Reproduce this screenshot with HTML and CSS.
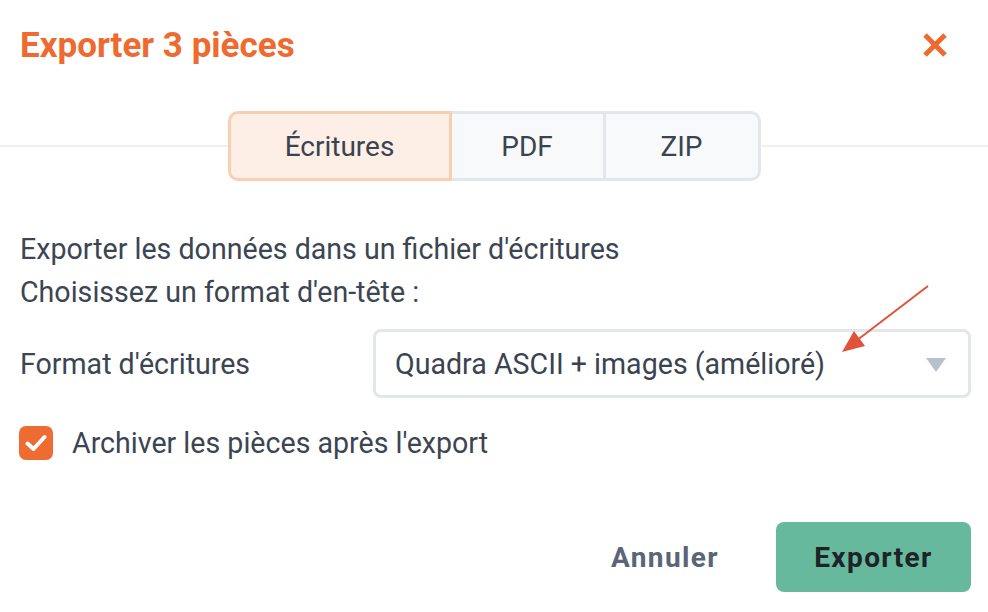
FILE: index.html
```html
<!DOCTYPE html>
<html lang="fr">
<head>
<meta charset="utf-8">
<title>Exporter 3 pièces</title>
<link rel="stylesheet" href="styles.css">
</head>
<body>
<div class="dialog">
  <div class="header">
    <h1 class="title">Exporter 3 pièces</h1>
    <button class="close" aria-label="Fermer">
      <svg width="26" height="26" viewBox="0 0 26 26"><path d="M3 3 L23 23 M23 3 L3 23" stroke="#ee6a2f" stroke-width="5" fill="none"/></svg>
    </button>
  </div>
  <div class="tabs-row">
    <div class="rule"></div>
    <div class="tabs">
      <div class="tab tab-active">Écritures</div>
      <div class="tab tab-pdf">PDF</div>
      <div class="tab tab-zip">ZIP</div>
    </div>
    <div class="rule"></div>
  </div>
  <div class="intro">
    <p>Exporter les données dans un fichier d'écritures</p>
    <p>Choisissez un format d'en-tête :</p>
  </div>
  <div class="field">
    <label class="field-label">Format d'écritures</label>
    <div class="select">
      <span>Quadra ASCII + images (amélioré)</span>
      <svg class="caret" width="20" height="14" viewBox="0 0 20 14"><path d="M0 0 H20 L10 14 Z" fill="#b9c0ca"/></svg>
    </div>
  </div>
  <div class="check-row">
    <span class="checkbox">
      <svg width="22" height="18" viewBox="0 0 22 18"><path d="M2.5 9.5 L8.5 15 L19.5 3" stroke="#fff" stroke-width="4" fill="none" stroke-linecap="round" stroke-linejoin="round"/></svg>
    </span>
    <span class="check-label">Archiver les pièces après l'export</span>
  </div>
  <div class="footer">
    <button class="btn-cancel">Annuler</button>
    <button class="btn-export">Exporter</button>
  </div>
</div>
<svg class="annotation" width="988" height="612" viewBox="0 0 988 612">
  <line x1="928" y1="286" x2="856" y2="341" stroke="#e0523c" stroke-width="2"/>
  <polygon points="842,352 865,346 854,331" fill="#e0523c"/>
</svg>
</body>
</html>
```

FILE: styles.css
```css
* { box-sizing: border-box; }
html, body { margin: 0; padding: 0; background: #fff; }
body {
  font-family: Roboto, "Noto Sans", Arial, sans-serif;
  color: #3c4552;
  width: 988px;
  height: 612px;
  overflow: hidden;
  position: relative;
}
.dialog { display: flex; flex-direction: column; }
.header {
  height: 90px;
  padding: 0 40px 0 20px;
  display: flex;
  align-items: center;
  justify-content: space-between;
}
.title {
  margin: 0;
  font-size: 35px;
  font-weight: 700;
  color: #ee6a2f;
}
.close {
  border: 0; background: none; padding: 0; margin: 0;
  width: 26px; height: 26px; display: block;
}
.close svg { display: block; }
.tabs-row {
  margin-top: 21px;
  display: flex;
  align-items: center;
  height: 70px;
}
.rule { flex: 1; height: 2px; background: #eef0f2; }
.tabs { display: flex; height: 70px; }
.tab {
  display: flex; align-items: center; justify-content: center;
  font-size: 28px;
  color: #3a4350;
  background: #f8f9fa;
  border: 3px solid #e3e6ea;
  border-left-width: 0;
}
.tab-active {
  width: 224px;
  background: #fdefe6;
  border: 3px solid #f9cfb4;
  border-radius: 10px 0 0 10px;
}
.tab-pdf { width: 154px; }
.tab-zip { width: 155px; border-radius: 0 10px 10px 0; }
.intro { margin-top: 47px; padding-left: 20px; }
.intro p { margin: 0; font-size: 28.6px; line-height: 43px; }
.field {
  margin-top: 15px;
  padding: 0 17px 0 20px;
  display: grid;
  grid-template-columns: 353px 1fr;
  align-items: center;
}
.field-label { font-size: 28.6px; }
.select {
  height: 69px;
  border: 3px solid #e3e6ea;
  border-radius: 8px;
  display: flex;
  align-items: center;
  justify-content: space-between;
  padding: 0 22px 0 19px;
  font-size: 28.6px;
  color: #3a4350;
}
.caret { display: block; margin-top: 2px; }
.check-row {
  margin-top: 28px;
  padding-left: 19px;
  display: flex;
  align-items: center;
  gap: 19px;
}
.checkbox {
  width: 34px; height: 34px;
  border-radius: 7px;
  background: #ee6b31;
  display: flex; align-items: center; justify-content: center;
}
.checkbox svg { display: block; }
.check-label { font-size: 28.6px; }
.footer {
  margin-top: 62px;
  padding-right: 17px;
  display: flex;
  justify-content: flex-end;
  align-items: center;
  gap: 57px;
}
button { font-family: inherit; cursor: pointer; }
.btn-cancel {
  border: 0; background: none; padding: 0;
  font-size: 28px; font-weight: 700; letter-spacing: 1.4px;
  color: #5a6577;
}
.btn-export {
  width: 195px; height: 70px;
  border: 0; border-radius: 8px;
  background: #66b99c;
  font-size: 28px; font-weight: 700; letter-spacing: 1.4px;
  color: #1e2327;
}
.annotation { position: absolute; left: 0; top: 0; pointer-events: none; }
```
